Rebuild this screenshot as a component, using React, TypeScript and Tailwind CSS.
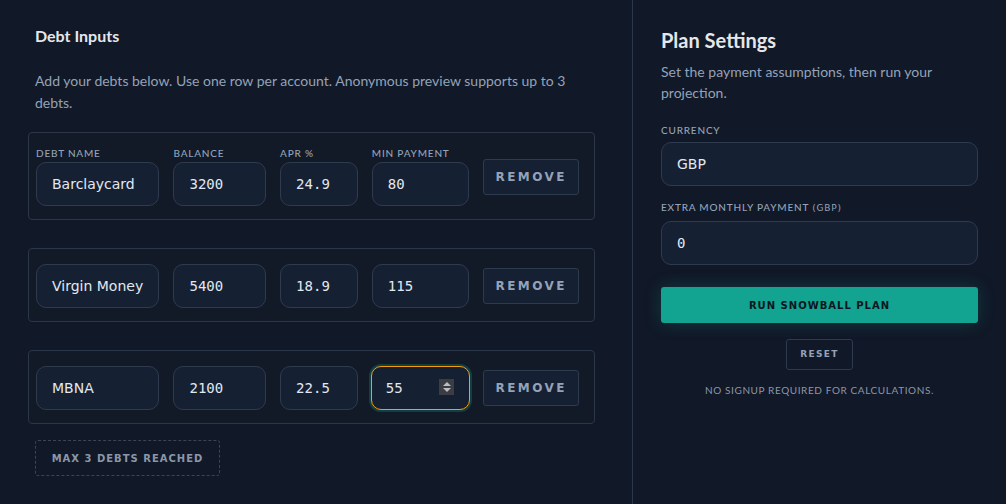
import React from "react";

type Debt = { name: string; balance: string; apr: string; min: string };

const debts: Debt[] = [
  { name: "Barclaycard", balance: "3200", apr: "24.9", min: "80" },
  { name: "Virgin Money", balance: "5400", apr: "18.9", min: "115" },
  { name: "MBNA", balance: "2100", apr: "22.5", min: "55" },
];

const lato = "font-['Lato','Noto_Sans',sans-serif]";
const dejavu = "font-['DejaVu_Sans','Noto_Sans',sans-serif]";
const mono = "font-['DejaVu_Sans_Mono','Liberation_Mono',monospace]";

const labelCls = `${lato} block text-[10px] font-medium uppercase tracking-[0.08em] text-[#94a3b8] leading-none`;
const boxCls =
  "h-[44px] rounded-[10px] border border-[#2e3a4e] bg-[#162033] flex items-center px-[15px] text-[14px] text-[#e2e8f0]";

function Field({
  label,
  value,
  width,
  isMono,
  focused,
}: {
  label?: string;
  value: string;
  width: string;
  isMono?: boolean;
  focused?: boolean;
}) {
  return (
    <div className={width}>
      {label && <span className={`${labelCls} mb-[4px]`}>{label}</span>}
      {focused ? (
        <div className="relative rounded-[12px] -m-[3px] p-[2px] bg-[#133f42]">
          <div
            className={`h-[44px] rounded-[10px] border border-[#f59e0b] bg-[#162033] flex items-center px-[14px] text-[14px] text-[#e2e8f0] ${mono}`}
          >
            {value}
          </div>
          <div className="absolute right-[18px] top-[15px] w-[15px] h-[16px] bg-[#3b3d42] flex flex-col items-center justify-center gap-[2px]">
            <svg width="8" height="4" viewBox="0 0 8 4">
              <path d="M0 4 L4 0 L8 4 Z" fill="#b9bec6" />
            </svg>
            <svg width="8" height="4" viewBox="0 0 8 4">
              <path d="M0 0 L4 4 L8 0 Z" fill="#b9bec6" />
            </svg>
          </div>
        </div>
      ) : (
        <div className={`${boxCls} ${isMono ? mono : dejavu} overflow-hidden whitespace-nowrap`}>
          {value}
        </div>
      )}
    </div>
  );
}

function DebtRow({ debt, first, focusMin }: { debt: Debt; first?: boolean; focusMin?: boolean }) {
  return (
    <div className="-mx-[7px] rounded-[4px] border border-[#2b3648] bg-[#121a28] pl-[7px] pr-[15px] pt-[15px] pb-[13px] flex items-center gap-[14px]">
      <Field label={first ? "Debt Name" : undefined} value={debt.name} width="w-[124px]" />
      <Field label={first ? "Balance" : undefined} value={debt.balance} width="w-[93px]" isMono />
      <Field label={first ? "APR %" : undefined} value={debt.apr} width="w-[78px]" isMono />
      <Field
        label={first ? "Min Payment" : undefined}
        value={debt.min}
        width="w-[98px]"
        isMono
        focused={focusMin}
      />
      <button
        className={`${dejavu} w-[96px] h-[36px] rounded-[3px] border border-[#2e3a4e] bg-[#162033] text-[12px] font-bold uppercase tracking-[0.2em] text-[#94a3b8]`}
      >
        Remove
      </button>
    </div>
  );
}

export default function App() {
  return (
    <div className="min-h-[504px] w-[1006px] bg-[#111827] flex">
      {/* Debt Inputs */}
      <div className="w-[632px] pl-[35px] pr-[44px] pt-[26px]">
        <h2 className={`${lato} text-[16px] font-bold text-[#e5e7eb] leading-[20px]`}>Debt Inputs</h2>
        <p className={`${lato} mt-[24px] text-[14px] leading-[22px] text-[#94a3b8]`}>
          Add your debts below. Use one row per account. Anonymous preview supports up to 3 debts.
        </p>
        <div className="mt-[18px] flex flex-col gap-[28px]">
          {debts.map((d, i) => (
            <DebtRow key={d.name} debt={d} first={i === 0} focusMin={i === 2} />
          ))}
        </div>
        <div
          className={`${dejavu} mt-[16px] w-[185px] h-[36px] rounded-[3px] border border-dashed border-[#3a4658] flex items-center justify-center text-[10px] font-bold uppercase tracking-[0.1em] text-[#8b97a9]`}
        >
          Max 3 debts reached
        </div>
      </div>

      {/* Plan Settings */}
      <div className="flex-1 border-l border-[#2b3648] px-[28px] pt-[27px]">
        <h2 className={`${lato} text-[20px] font-bold text-[#e5e7eb] leading-[26px]`}>Plan Settings</h2>
        <p className={`${lato} mt-[8px] text-[14px] leading-[21px] text-[#94a3b8]`}>
          Set the payment assumptions, then run your projection.
        </p>
        <div className="mt-[22px]">
          <span className={labelCls}>Currency</span>
          <div className={`${boxCls} ${dejavu} mt-[7px]`}>GBP</div>
        </div>
        <div className="mt-[16px]">
          <span className={labelCls}>
            Extra monthly payment <span className={`${dejavu} text-[9px]`}>(GBP)</span>
          </span>
          <div className={`${boxCls} ${mono} mt-[8px]`}>0</div>
        </div>
        <button
          className={`${dejavu} mt-[22px] w-full h-[36px] rounded-[3px] bg-[#12a391] shadow-[0_0_18px_rgba(20,184,166,0.22)] text-[10px] font-bold uppercase tracking-[0.1em] text-[#0b1620]`}
        >
          Run snowball plan
        </button>
        <div className="mt-[16px] flex justify-center">
          <button
            className={`${dejavu} w-[67px] h-[31px] rounded-[3px] border border-[#2e3a4e] text-[9px] font-bold uppercase tracking-[0.15em] text-[#94a3b8]`}
          >
            Reset
          </button>
        </div>
        <p className={`${lato} mt-[13px] text-center text-[10px] leading-[15px] uppercase tracking-[0.06em] text-[#8b97a9]`}>
          No signup required for calculations.
        </p>
      </div>
    </div>
  );
}
